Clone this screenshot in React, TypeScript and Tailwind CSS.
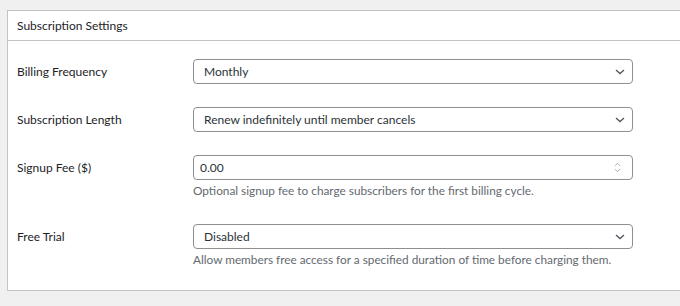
const font = { fontFamily: "Lato, 'Liberation Sans', sans-serif" };

function Chevron() {
  return (
    <svg width="10" height="6" viewBox="0 0 10 6" fill="none" stroke="#50575e" strokeWidth="1.3">
      <path d="M1 1 L5 4.6 L9 1" />
    </svg>
  );
}

function SelectBox({ value }: { value: string }) {
  return (
    <div className="flex h-[25px] w-[440px] items-center justify-between rounded-[4px] border border-[#8c8f94] bg-white pl-[10px] pr-[7px] text-[12px] text-[#2c3338]">
      <span>{value}</span>
      <Chevron />
    </div>
  );
}

function NumberBox({ value }: { value: string }) {
  return (
    <div className="flex h-[25px] w-[440px] items-center justify-between rounded-[4px] border border-[#8c8f94] bg-white pl-[6px] pr-[11px] text-[12px] text-[#2c3338]">
      <span>{value}</span>
      <svg width="7" height="11" viewBox="0 0 7 11" fill="none" stroke="#a7aaad" strokeWidth="1">
        <path d="M1 3.8 L3.5 1.3 L6 3.8" />
        <path d="M1 7.2 L3.5 9.7 L6 7.2" />
      </svg>
    </div>
  );
}

function Row({
  label,
  children,
  help,
}: {
  label: string;
  children: React.ReactNode;
  help?: string;
}) {
  return (
    <div className="flex items-start">
      <div className="flex h-[25px] w-[176px] shrink-0 items-center text-[12px] text-[#1d2327]">
        {label}
      </div>
      <div className="flex flex-col">
        {children}
        {help && (
          <p className="mt-[3px] mb-[2px] text-[11.8px] leading-[16px] text-[#646970]">{help}</p>
        )}
      </div>
    </div>
  );
}

export default function App() {
  return (
    <div className="h-[306px] w-[680px] overflow-hidden bg-[#f0f0f1] pt-[10px] pl-[7px]" style={font}>
      <div className="w-[690px] border border-[#c3c4c7] bg-white">
        <div className="flex h-[30px] items-center border-b border-[#c3c4c7] px-[9px] text-[12px] text-[#1d2327]">
          Subscription Settings
        </div>
        <div className="flex flex-col gap-[23px] px-[9px] pt-[18px] pb-[20px]">
          <Row label="Billing Frequency">
            <SelectBox value="Monthly" />
          </Row>
          <Row label="Subscription Length">
            <SelectBox value="Renew indefinitely until member cancels" />
          </Row>
          <Row
            label="Signup Fee ($)"
            help="Optional signup fee to charge subscribers for the first billing cycle."
          >
            <NumberBox value="0.00" />
          </Row>
          <Row
            label="Free Trial"
            help="Allow members free access for a specified duration of time before charging them."
          >
            <SelectBox value="Disabled" />
          </Row>
        </div>
      </div>
    </div>
  );
}
